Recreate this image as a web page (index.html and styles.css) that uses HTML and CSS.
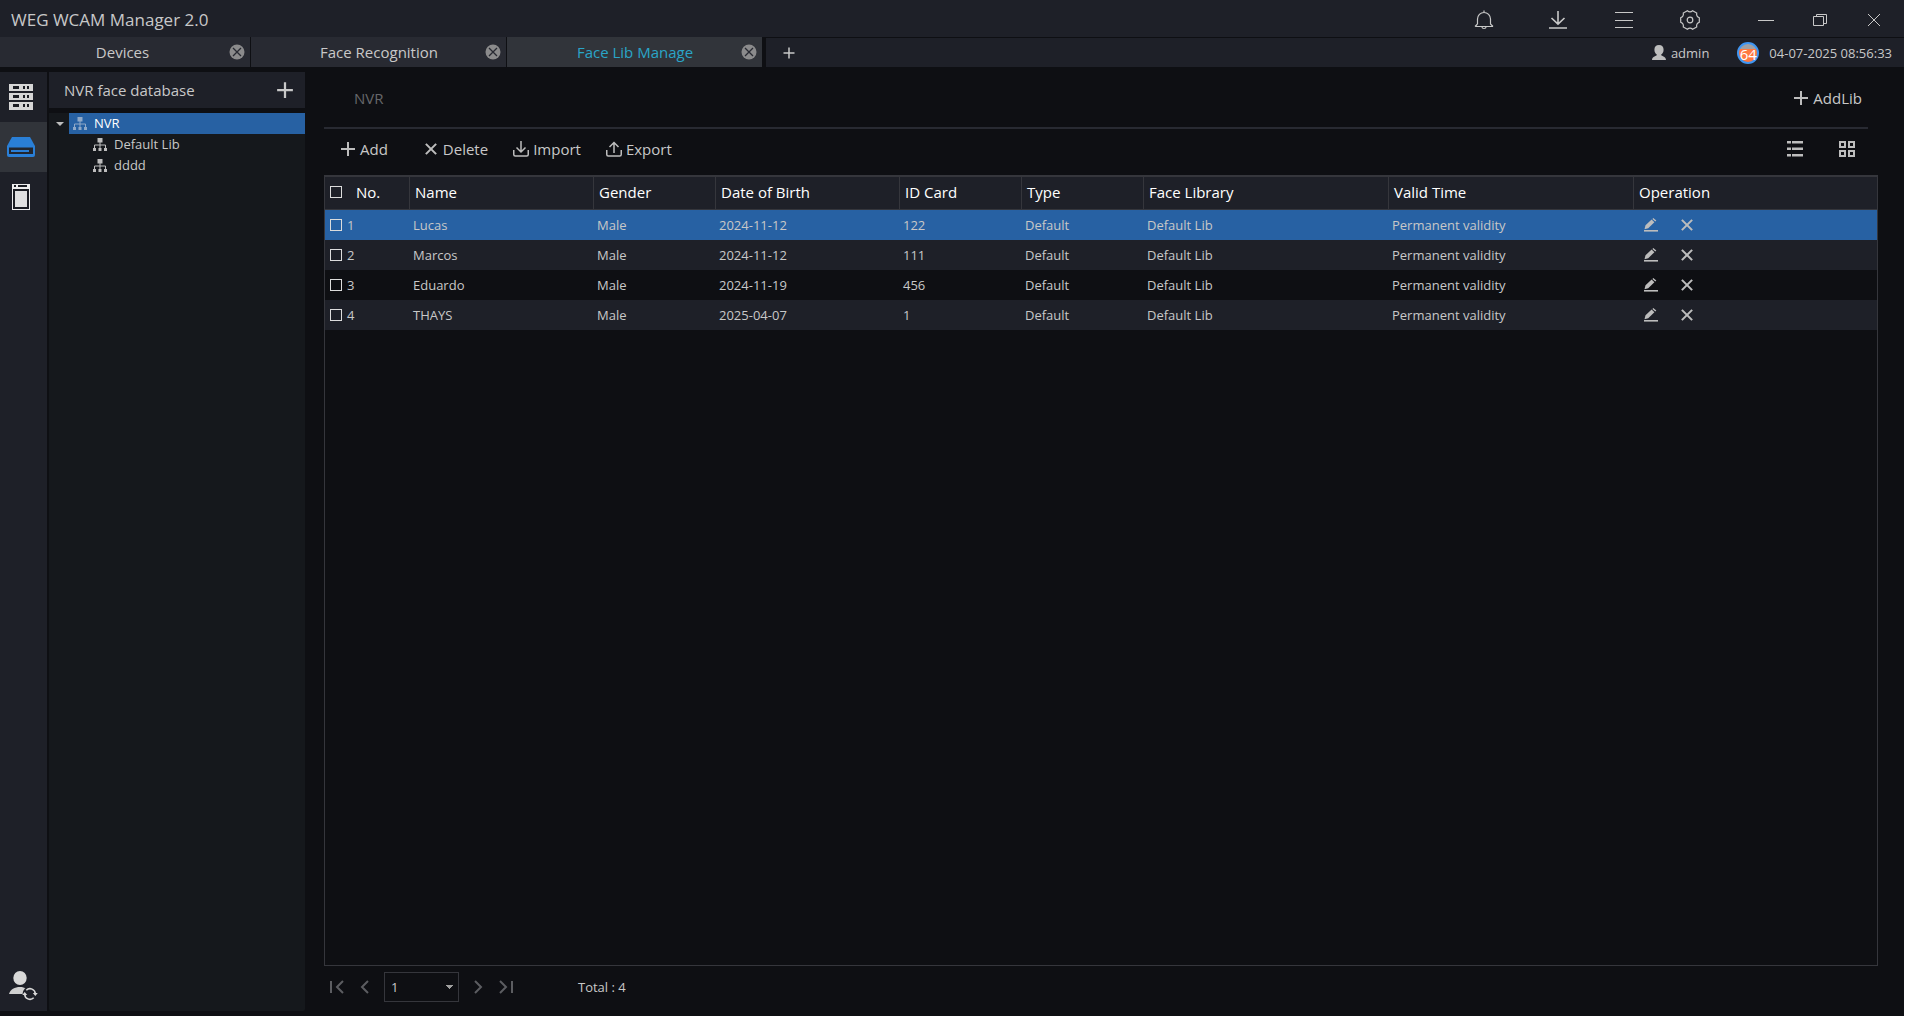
FILE: index.html
```html
<!DOCTYPE html>
<html lang="en">
  <head>
    <meta charset="UTF-8" />
    <meta name="viewport" content="width=device-width, initial-scale=1.0" />
    <title>WEG WCAM Manager 2.0</title>
    <link rel="stylesheet" href="styles.css">
  </head>
  <body>
    <!-- shared icons -->
    <svg class="sprite" aria-hidden="true">
      <symbol id="i-plus" viewBox="0 0 16 16">
        <path d="M8 1v14M1 8h14" fill="none" stroke="currentColor" stroke-width="2" />
      </symbol>
      <symbol id="i-cross" viewBox="0 0 14 14">
        <path d="M1 1l12 12M13 1L1 13" fill="none" stroke="currentColor" stroke-width="2.4" />
      </symbol>
      <symbol id="i-close" viewBox="0 0 16 16">
        <circle cx="8" cy="8" r="7.5" fill="#8b8b8c" />
        <path d="M4 4l8 8M12 4l-8 8" fill="none" stroke="#282a32" stroke-width="1.3" />
      </symbol>
      <symbol id="i-edit" viewBox="0 0 14 14">
        <path d="M0 12h14v1.6H0z" fill="currentColor" />
        <path d="M.5 11.2l1-4L7.600 1.500l2.800 2.700-6.200 6zM8.400.9l.9-.9 3 2.600-1 1z" fill="currentColor" />
      </symbol>
      <symbol id="i-tree" viewBox="0 0 14 13">
        <path d="M4.500 0h5v4.500h-5z" fill="currentColor" />
        <path d="M7 4v6M1.500 10V7h11v3" fill="none" stroke="currentColor" />
        <path d="M0 10h3v3H0zM5.500 10h3v3h-3zM11 10h3v3h-3z" fill="currentColor" />
      </symbol>
    </svg>

    <header class="titlebar">
      <h1 class="app-title">WEG WCAM Manager 2.0</h1>
      <div class="title-tools">
        <button class="icon-btn alarm-btn" aria-label="Alarms">
          <svg width="20" height="20" viewBox="0 0 20 20" fill="none" stroke="currentColor" stroke-width="1.2">
            <path d="M10 .5v2M1 16.500h18M3.500 14V9a6.500 6.500 0 0 1 13 0v5l2.500 2.500M3.500 14L1 16.500M8 17c0 2 4 2 4 0" />
          </svg>
        </button>
        <button class="icon-btn" aria-label="Downloads">
          <svg width="20" height="20" viewBox="0 0 20 20" fill="none" stroke="currentColor" stroke-width="1.600">
            <path d="M10 1v13M3.500 8l6.500 6.200L16.500 8M1 18h18" />
          </svg>
        </button>
        <button class="icon-btn" aria-label="Menu">
          <svg width="20" height="20" viewBox="0 0 20 20" fill="none" stroke="currentColor">
            <path d="M1 2.500h18M1 10.500h18M1 17.500h18" />
          </svg>
        </button>
        <button class="icon-btn" aria-label="Settings">
          <svg width="20" height="20" viewBox="0 0 20 20" fill="none" stroke="currentColor" stroke-width="1.2">
            <path d="M19.300 7.700v4.600Q16.100 13.500 16.700 16.900L12.600 19.200Q10 17 7.400 19.200L3.300 16.900Q3.900 13.500 .7 12.300V7.700Q3.900 6.500 3.300 3.100L7.400 .8Q10 3 12.600 .8L16.700 3.100Q16.100 6.500 19.300 7.700z" />
            <circle cx="10" cy="10" r="2.800" />
          </svg>
        </button>
      </div>
      <div class="window-tools">
        <button class="icon-btn" aria-label="Minimize">
          <svg width="16" height="16" viewBox="0 0 16 16"><path d="M0 8.500h16" stroke="currentColor" /></svg>
        </button>
        <button class="icon-btn" aria-label="Restore">
          <svg width="16" height="16" viewBox="0 0 16 16" fill="none" stroke="currentColor">
            <path d="M1.500 4.500h10v9h-10zM4.500 4V2.500h10v9H12" />
          </svg>
        </button>
        <button class="icon-btn" aria-label="Close">
          <svg width="16" height="16" viewBox="0 0 16 16"><path d="M2 2l12 12M14 2L2 14" stroke="currentColor" /></svg>
        </button>
      </div>
    </header>

    <nav class="tabbar">
      <div class="tab">
        <a class="tab-link" href="#devices">Devices</a>
        <button class="tab-close" aria-label="Close Devices"><svg width="16" height="16"><use href="#i-close" /></svg></button>
      </div>
      <div class="tab">
        <a class="tab-link" href="#recognition">Face Recognition</a>
        <button class="tab-close" aria-label="Close Face Recognition"><svg width="16" height="16"><use href="#i-close" /></svg></button>
      </div>
      <div class="tab active">
        <a class="tab-link" href="#library">Face Lib Manage</a>
        <button class="tab-close" aria-label="Close Face Lib Manage"><svg width="16" height="16"><use href="#i-close" /></svg></button>
      </div>
      <div class="status">
        <button class="icon-btn tab-add" aria-label="New tab">
          <svg width="12" height="12" viewBox="0 0 12 12"><path d="M6 .5v11M.5 6h11" stroke="currentColor" stroke-width="1.5" /></svg>
        </button>
        <span class="user">
          <svg width="14" height="16" viewBox="0 0 14 16" fill="currentColor">
            <path d="M7 0c3 0 4.600 2 4.600 4.700C11.600 7 10.400 9 9 9.700c0 1.400 5 1.300 5 5.300H0c0-4 5-3.900 5-5.300C3.600 9 2.400 7 2.400 4.700 2.400 2 4 0 7 0z" />
          </svg>
          admin
        </span>
        <span class="load">64</span>
        <time class="clock">04-07-2025 08:56:33</time>
      </div>
    </nav>

    <div class="workspace">
      <aside class="rail">
        <button class="rail-btn" aria-label="Servers">
          <svg width="24" height="26" viewBox="0 0 24 26">
            <path d="M0 0h24v7H0zM0 9h24v7H0zM0 18h24v8H0z" fill="#d6d6d6" />
            <path d="M4 2h6v3H4zM14 2h2v3h-2zM18 2h2v3h-2zM4 11h6v3H4zM14 11h2v3h-2zM18 11h2v3h-2zM4 20h6v3H4zM14 20h2v3h-2zM18 20h2v3h-2z" fill="#1a1c22" />
          </svg>
        </button>
        <button class="rail-btn active" aria-label="NVR">
          <svg width="28" height="20" viewBox="0 0 28 20">
            <path d="M5 0h18l5 9v9q0 2-2 2H2q-2 0-2-2V9z" fill="#2a7fd6" />
            <path d="M2 10.500h24V17H2z" fill="#22262e" />
            <path d="M4 13h18v2H4z" fill="#2a7fd6" />
          </svg>
        </button>
        <button class="rail-btn" aria-label="Access control">
          <svg width="18" height="26" viewBox="0 0 18 26">
            <path d="M0 0h18v26H0z" fill="#ededed" />
            <path d="M2 1h2v2H2zM6 1h9v2H6zM1 5h16v20H1z" fill="#1a1c22" />
            <path d="M3 7h12v16H3z" fill="#e0e0e0" />
          </svg>
        </button>
        <button class="rail-btn rail-user" aria-label="Switch user">
          <svg width="30" height="30" viewBox="0 0 30 30">
            <ellipse cx="11" cy="7" rx="6.700" ry="7" fill="#d8d8d8" />
            <path d="M0 23c1-4.500 6-7 11-7s8 2 9 7z" fill="#cfcfcf" />
            <circle cx="21" cy="23" r="7.500" fill="#1e2028" />
            <path d="M26.300 23a5.300 5.300 0 0 0-9-3.800M15.700 23a5.300 5.300 0 0 0 9 3.800" fill="none" stroke="#d8d8d8" stroke-width="1.600" />
            <path d="M23.800 22h5l-2.500 3zM13.200 24h5l-2.500-3z" fill="#d8d8d8" />
          </svg>
        </button>
      </aside>

      <section class="library">
        <div class="library-head">
          <h2 class="library-title">NVR face database</h2>
          <button class="icon-btn" aria-label="Add database"><svg width="18" height="18"><use href="#i-plus" /></svg></button>
        </div>
        <ul class="tree">
          <li class="tree-root">
            <svg class="caret" width="8" height="4" viewBox="0 0 8 4"><path d="M0 0h8L4 4z" fill="currentColor" /></svg>
            <a class="tree-item selected" href="#nvr"><svg width="14" height="13"><use href="#i-tree" /></svg>NVR</a>
          </li>
          <li><a class="tree-item child" href="#default"><svg width="14" height="13"><use href="#i-tree" /></svg>Default Lib</a></li>
          <li><a class="tree-item child" href="#dddd"><svg width="14" height="13"><use href="#i-tree" /></svg>dddd</a></li>
        </ul>
      </section>

      <main class="content">
        <div class="content-head">
          <span class="crumb">NVR</span>
          <button class="tool-btn"><svg width="16" height="16"><use href="#i-plus" /></svg>AddLib</button>
        </div>

        <div class="toolbar">
          <button class="tool-btn"><svg width="16" height="16"><use href="#i-plus" /></svg>Add</button>
          <button class="tool-btn delete-btn"><svg width="16" height="12"><use href="#i-cross" /></svg>Delete</button>
          <button class="tool-btn">
            <svg width="16" height="16" viewBox="0 0 16 16" fill="none" stroke="currentColor" stroke-width="1.5">
              <path d="M8 0v11M3.500 6.500L8 11l4.500-4.500M.75 9v4.500q0 1.500 1.500 1.500h11.500q1.500 0 1.500-1.500V9" />
            </svg>Import
          </button>
          <button class="tool-btn">
            <svg width="16" height="16" viewBox="0 0 16 16" fill="none" stroke="currentColor" stroke-width="1.5">
              <path d="M8 12V1.500M3.500 6L8 1.500 12.500 6M.75 9v4.500q0 1.500 1.500 1.500h11.500q1.500 0 1.500-1.500V9" />
            </svg>Export
          </button>
          <div class="view-tools">
            <button class="icon-btn" aria-label="List view">
              <svg width="16" height="16" viewBox="0 0 16 16" fill="currentColor">
                <path d="M0 0h4v2.500H0zM5 0h11v2.500H5zM0 6.500h4V9H0zM5 6.500h11V9H5zM0 13h4v2.500H0zM5 13h11v2.500H5z" />
              </svg>
            </button>
            <button class="icon-btn" aria-label="Grid view">
              <svg width="16" height="16" viewBox="0 0 16 16" fill="none" stroke="currentColor" stroke-width="2">
                <path d="M1 1h5v5H1zM10 1h5v5h-5zM1 10h5v5H1zM10 10h5v5h-5z" />
              </svg>
            </button>
          </div>
        </div>

        <div class="table-frame">
          <table class="faces">
            <colgroup>
              <col class="col-no"><col class="col-wide"><col class="col-short"><col class="col-wide">
              <col class="col-short"><col class="col-short"><col class="col-long"><col class="col-long"><col>
            </colgroup>
            <thead>
              <tr>
                <th><label class="pick"><input type="checkbox">No.</label></th>
                <th>Name</th>
                <th>Gender</th>
                <th>Date of Birth</th>
                <th>ID Card</th>
                <th>Type</th>
                <th>Face Library</th>
                <th>Valid Time</th>
                <th>Operation</th>
              </tr>
            </thead>
            <tbody>
              <tr class="selected">
                <td><label class="pick"><input type="checkbox">1</label></td>
                <td>Lucas</td><td>Male</td><td>2024-11-12</td><td>122</td><td>Default</td><td>Default Lib</td><td>Permanent validity</td>
                <td>
                  <div class="ops">
                    <button class="icon-btn" aria-label="Edit Lucas"><svg width="14" height="14"><use href="#i-edit" /></svg></button>
                    <button class="icon-btn" aria-label="Delete Lucas"><svg width="12" height="12"><use href="#i-cross" /></svg></button>
                  </div>
                </td>
              </tr>
              <tr>
                <td><label class="pick"><input type="checkbox">2</label></td>
                <td>Marcos</td><td>Male</td><td>2024-11-12</td><td>111</td><td>Default</td><td>Default Lib</td><td>Permanent validity</td>
                <td>
                  <div class="ops">
                    <button class="icon-btn" aria-label="Edit Marcos"><svg width="14" height="14"><use href="#i-edit" /></svg></button>
                    <button class="icon-btn" aria-label="Delete Marcos"><svg width="12" height="12"><use href="#i-cross" /></svg></button>
                  </div>
                </td>
              </tr>
              <tr>
                <td><label class="pick"><input type="checkbox">3</label></td>
                <td>Eduardo</td><td>Male</td><td>2024-11-19</td><td>456</td><td>Default</td><td>Default Lib</td><td>Permanent validity</td>
                <td>
                  <div class="ops">
                    <button class="icon-btn" aria-label="Edit Eduardo"><svg width="14" height="14"><use href="#i-edit" /></svg></button>
                    <button class="icon-btn" aria-label="Delete Eduardo"><svg width="12" height="12"><use href="#i-cross" /></svg></button>
                  </div>
                </td>
              </tr>
              <tr>
                <td><label class="pick"><input type="checkbox">4</label></td>
                <td>THAYS</td><td>Male</td><td>2025-04-07</td><td>1</td><td>Default</td><td>Default Lib</td><td>Permanent validity</td>
                <td>
                  <div class="ops">
                    <button class="icon-btn" aria-label="Edit THAYS"><svg width="14" height="14"><use href="#i-edit" /></svg></button>
                    <button class="icon-btn" aria-label="Delete THAYS"><svg width="12" height="12"><use href="#i-cross" /></svg></button>
                  </div>
                </td>
              </tr>
            </tbody>
          </table>
        </div>

        <footer class="pager">
          <button class="icon-btn" aria-label="First page" disabled>
            <svg width="14" height="14" viewBox="0 0 14 14" fill="none" stroke="currentColor" stroke-width="2"><path d="M1 1v12M13 1L7 7l6 6" /></svg>
          </button>
          <button class="icon-btn" aria-label="Previous page" disabled>
            <svg width="10" height="14" viewBox="0 0 10 14" fill="none" stroke="currentColor" stroke-width="2"><path d="M9 1L3 7l6 6" /></svg>
          </button>
          <select class="page-select" aria-label="Page"><option>1</option></select>
          <button class="icon-btn" aria-label="Next page" disabled>
            <svg width="10" height="14" viewBox="0 0 10 14" fill="none" stroke="currentColor" stroke-width="2"><path d="M1 1l6 6-6 6" /></svg>
          </button>
          <button class="icon-btn" aria-label="Last page" disabled>
            <svg width="14" height="14" viewBox="0 0 14 14" fill="none" stroke="currentColor" stroke-width="2"><path d="M1 1l6 6-6 6M13 1v12" /></svg>
          </button>
          <span class="total">Total : 4</span>
        </footer>
      </main>
    </div>
  </body>
</html>
```
FILE: styles.css
```css
:root {
  --bg: #0e0f13;
  --panel: #1e2028;
  --panel-dark: #15181c;
  --tab: #282a32;
  --raised: #31343a;
  --line: #35363c;
  --accent: #2761a3;
  --cyan: #2aa5c8;
  --text: #c8c8c8;
  --icon: #bdbdbd;
}

* {
  margin: 0;
  padding: 0;
  box-sizing: border-box;
}

html {
  background-color: #fff;
}

body {
  height: 100vh;
  margin-right: 4px;
  display: flex;
  flex-direction: column;
  font-family: "Segoe UI", "Open Sans", "Noto Sans", sans-serif;
  font-size: 13px;
  line-height: 20px;
  background-color: var(--bg);
  color: var(--text);
}

button,
select {
  font: inherit;
  color: inherit;
  background: none;
  border: none;
}

a {
  color: inherit;
  text-decoration: none;
}

svg {
  display: block;
  flex: none;
}

.sprite {
  width: 0;
  height: 0;
  position: absolute;
}

.icon-btn {
  display: flex;
  align-items: center;
  justify-content: center;
}

/* Title bar */
.titlebar {
  height: 37px;
  display: flex;
  align-items: center;
  padding: 2px 22px 0 11px;
  background-color: var(--panel);
}

.app-title {
  flex: 1;
  font-size: 17px;
  font-weight: 400;
}

.title-tools {
  display: flex;
  gap: 46px;
  padding-right: 58px;
}

.alarm-btn {
  margin-right: 8px;
}

.window-tools {
  display: flex;
  gap: 38px;
}

/* Tabs */
.tabbar {
  height: 30px;
  display: flex;
  gap: 1px;
}

.tab {
  width: 255px;
  display: flex;
  align-items: center;
  padding: 0 5px 0 22px;
  background-color: var(--tab);
  font-size: 15px;
}

.tab:first-child {
  width: 250px;
  padding-left: 16px;
}

.tab.active {
  background-color: var(--raised);
  color: var(--cyan);
}

.tab-link {
  flex: 1;
  text-align: center;
}

.status {
  flex: 1;
  display: flex;
  align-items: center;
  margin-top: 1px;
  margin-left: 3px;
  padding: 0 12px 0 17px;
  background-color: var(--panel);
}

.tab-add {
  margin-right: auto;
}

.user {
  display: flex;
  align-items: center;
  gap: 5px;
}

.user svg {
  color: var(--icon);
}

.load {
  width: 22px;
  height: 22px;
  margin: 0 10px 0 28px;
  border: 2px solid #3f96f3;
  border-radius: 50%;
  background: linear-gradient(#a0a0a4 30%, #ff7840 30%);
  color: #fff;
  font-size: 15px;
  line-height: 20px;
  display: flex;
  justify-content: center;
}

/* Workspace */
.workspace {
  flex: 1;
  min-height: 0;
  display: flex;
  padding: 5px 0;
}

.rail {
  width: 47px;
  margin-right: 2px;
  display: flex;
  flex-direction: column;
  background-color: var(--panel);
}

.rail-btn {
  height: 50px;
  padding-right: 6px;
  display: flex;
  align-items: center;
  justify-content: center;
}

.rail-btn.active {
  background-color: var(--raised);
}

.rail-user {
  margin-top: auto;
  padding-right: 0;
}

.library {
  width: 256px;
  display: flex;
  flex-direction: column;
  gap: 5px;
}

.library-head {
  height: 36px;
  padding: 0 11px 0 15px;
  display: flex;
  align-items: center;
  justify-content: space-between;
  background-color: var(--panel);
}

.library-title {
  font-size: 15px;
  font-weight: 400;
}

.tree {
  flex: 1;
  list-style: none;
  background-color: var(--panel-dark);
  border-radius: 0 0 2px 2px;
}

.tree svg {
  color: var(--icon);
}

.tree-root {
  display: flex;
  align-items: center;
}

.caret {
  margin: 0 5px 0 7px;
}

.tree-item {
  flex: 1;
  height: 21px;
  padding: 0 0 1px 4px;
  display: flex;
  align-items: center;
  gap: 7px;
}

.tree-item.selected {
  background-color: var(--accent);
  color: #fff;
}

.tree-item.selected svg {
  color: #8fa9c8;
}

.tree-item.child {
  padding-left: 44px;
}

/* Content */
.content {
  flex: 1;
  margin: 0 26px 0 19px;
  display: flex;
  flex-direction: column;
}

.content-head {
  margin-right: 10px;
  padding: 0 6px 3px 30px;
  height: 57px;
  display: flex;
  align-items: center;
  justify-content: space-between;
  border-bottom: 2px solid var(--tab);
}

.crumb {
  font-size: 15px;
  color: #66676a;
}

.toolbar {
  height: 46px;
  padding: 0 23px 7px 16px;
  display: flex;
  align-items: center;
  gap: 25px;
}

.tool-btn {
  display: flex;
  align-items: center;
  gap: 4px;
  font-size: 15px;
}

.tool-btn svg,
.view-tools svg {
  color: var(--icon);
}

.delete-btn {
  margin-left: 10px;
}

.view-tools {
  margin-left: auto;
  display: flex;
  gap: 36px;
}

.table-frame {
  flex: 1;
  border: 1px solid var(--line);
  border-top-width: 2px;
}

.faces {
  width: 100%;
  table-layout: fixed;
  border-collapse: separate;
  border-spacing: 0;
}

.col-no {
  width: 85px;
}

.col-wide {
  width: 184px;
}

.col-short {
  width: 122px;
}

.col-long {
  width: 245px;
}

.faces th {
  height: 33px;
  padding: 0 0 2px 5px;
  background-color: var(--panel);
  border-right: 1px solid var(--line);
  border-bottom: 1px solid var(--line);
  color: #fff;
  font-size: 15px;
  font-weight: 400;
  text-align: left;
}

.faces th:last-child {
  border-right: none;
}

.faces td {
  height: 30px;
  padding-left: 3px;
}

.faces td:first-child {
  padding-left: 5px;
}

.faces tr:nth-child(even) td {
  background-color: var(--panel);
}

.faces tr.selected td {
  background-color: var(--accent);
}

.pick {
  display: flex;
  align-items: center;
  gap: 5px;
}

th .pick {
  gap: 14px;
}

.pick input {
  appearance: none;
  width: 12px;
  height: 12px;
  border: 1px solid #dcdcdc;
}

.ops {
  display: flex;
  align-items: center;
  gap: 23px;
  padding-left: 7px;
  color: var(--icon);
}

/* Pager */
.pager {
  height: 45px;
  padding: 0 0 3px 6px;
  display: flex;
  align-items: center;
  gap: 15px;
}

.pager .icon-btn {
  color: #5c5d61;
}

.page-select {
  appearance: none;
  width: 75px;
  height: 30px;
  padding-left: 6px;
  border: 1px solid var(--line);
  background: linear-gradient(to bottom right, #a0a0a0 50%, transparent 50%) right 4px center / 4px 4px no-repeat,
    linear-gradient(to bottom left, #a0a0a0 50%, transparent 50%) right 8px center / 4px 4px no-repeat;
}

.total {
  margin-left: 50px;
}
```
